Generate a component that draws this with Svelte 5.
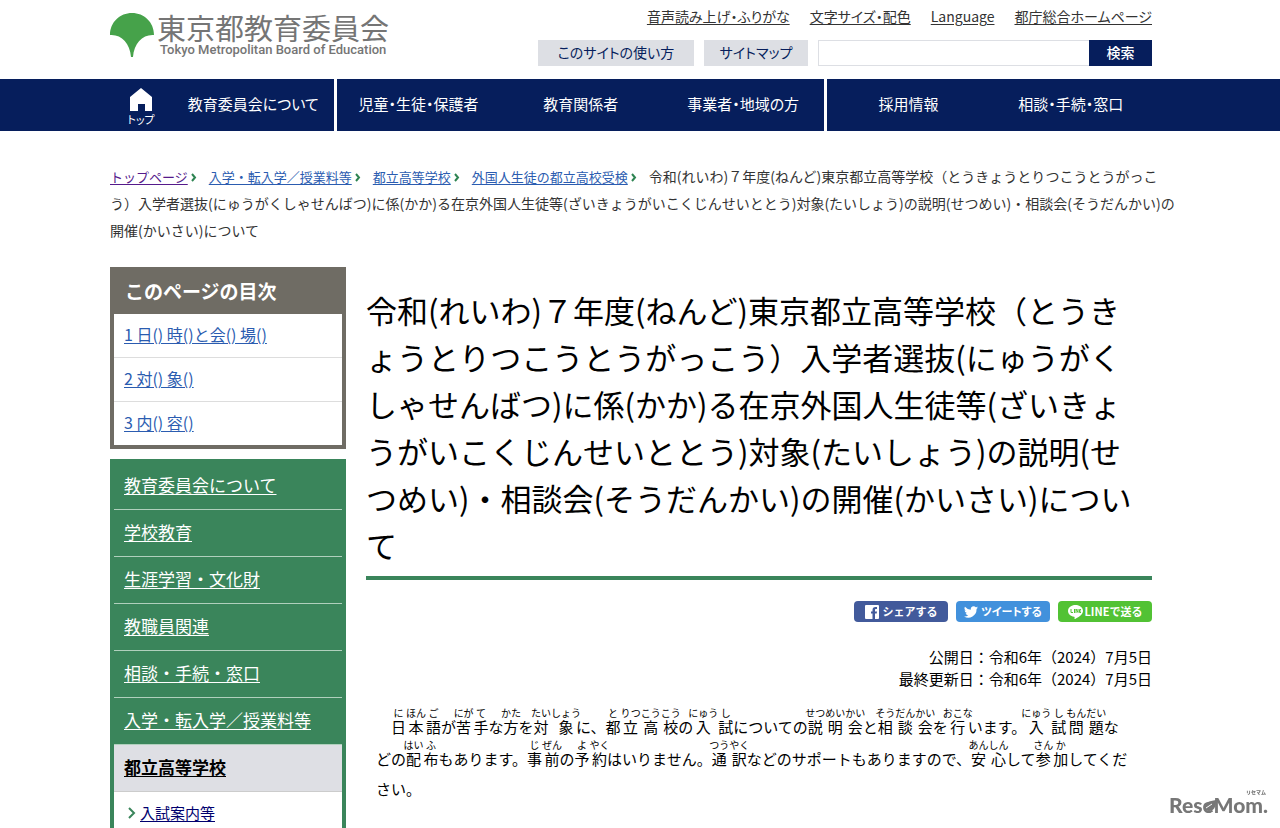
<script lang="ts">
    type Part = string | [string, string];

    const topLinks = ['音声読み上げ・ふりがな', '文字サイズ・配色', 'Language', '都庁総合ホームページ'];

    const nav = [
        { title: '教育委員会について', last: true },
        { title: '児童・生徒・保護者' },
        { title: '教育関係者' },
        { title: '事業者・地域の方', last: true },
        { title: '採用情報' },
        { title: '相談・手続・窓口' }
    ];

    const crumbs = [
        { title: 'トップページ', visited: true },
        { title: '入学・転入学／授業料等' },
        { title: '都立高等学校' },
        { title: '外国人生徒の都立高校受検' }
    ];

    const toc = ['1 日() 時()と会() 場()', '2 対() 象()', '3 内() 容()'];

    const categories = [
        '教育委員会について',
        '学校教育',
        '生涯学習・文化財',
        '教職員関連',
        '相談・手続・窓口',
        '入学・転入学／授業料等'
    ];

    const lines: Part[][] = [
        [
            ['日', 'に'], ['本', 'ほん'], ['語', 'ご'], 'が', ['苦', 'にが'], ['手', 'て'], 'な', ['方', 'かた'], 'を',
            ['対', 'たい'], ['象', 'しょう'], 'に、', ['都', 'と'], ['立', 'りつ'], ['高', 'こう'], ['校', 'こう'], 'の',
            ['入', 'にゅう'], ['試', 'し'], 'についての', ['説', 'せつ'], ['明', 'めい'], ['会', 'かい'], 'と',
            ['相', 'そう'], ['談', 'だん'], ['会', 'かい'], 'を', ['行', 'おこな'], 'います。',
            ['入', 'にゅう'], ['試', 'し'], ['問', 'もん'], ['題', 'だい'], 'な'
        ],
        [
            'どの', ['配', 'はい'], ['布', 'ふ'], 'もあります。', ['事', 'じ'], ['前', 'ぜん'], 'の', ['予', 'よ'], ['約', 'やく'],
            'はいりません。', ['通', 'つう'], ['訳', 'やく'], 'などのサポートもありますので、',
            ['安', 'あん'], ['心', 'しん'], 'して', ['参', 'さん'], ['加', 'か'], 'してくだ'
        ],
        ['さい。']
    ];
</script>

<header class="header wrap">
    <a href="#top" class="logo" aria-label="東京都教育委員会">
        <svg class="logo__mark" viewBox="0 0 44 44" aria-hidden="true">
            <path fill="#46a24a" d="M0 22C0 9 10 0 22 0s22 9 22 22c-11-1-20 8-21 22h-2C20 30 11 21 0 22z" />
        </svg>
        <span class="logo__text">
            <span class="logo__ja">東京都教育委員会</span>
            <span class="logo__en">Tokyo Metropolitan Board of Education</span>
        </span>
    </a>
    <div class="tools">
        <ul class="tools__links">
            {#each topLinks as link}
                <li><a href="#top">{link}</a></li>
            {/each}
        </ul>
        <div class="tools__row">
            <a href="#guide" class="tools__button tools__button_wide">このサイトの使い方</a>
            <a href="#sitemap" class="tools__button">サイトマップ</a>
            <form class="search">
                <input type="text" class="search__input" aria-label="サイト内検索">
                <button type="button" class="search__submit">検索</button>
            </form>
        </div>
    </div>
</header>

<nav class="nav">
    <div class="nav__inner wrap">
        <a href="#top" class="nav__home">
            <svg viewBox="0 0 22 23" width="22" height="23" aria-hidden="true">
                <path fill="#fff" d="M11 0l11 9v14h-7v-7H8v7H0V9z" />
            </svg>
            トップ
        </a>
        {#each nav as item}
            <a href="#nav" class="nav__item" class:nav__item_last={item.last}>{item.title}</a>
        {/each}
    </div>
</nav>

<div class="wrap">
    <div class="crumbs">
        {#each crumbs as crumb}
            <a href="#crumb" class:visited={crumb.visited}>{crumb.title}</a><svg class="crumbs__arrow" viewBox="0 0 6 9" aria-hidden="true"><path fill="none" stroke="#2e8452" stroke-width="2" d="M1 1l3 3.500L1 8" /></svg>
        {/each}<span class="crumbs__current">令和(れいわ)７年度(ねんど)東京都立高等学校（とうきょうとりつこうとうがっこ<br>う）入学者選抜(にゅうがくしゃせんばつ)に係(かか)る在京外国人生徒等(ざいきょうがいこくじんせいととう)対象(たいしょう)の説明(せつめい)・相談会(そうだんかい)の<br>開催(かいさい)について</span>
    </div>

    <div class="columns">
        <aside class="side">
            <section class="toc">
                <h2 class="toc__title">このページの目次</h2>
                <ul>
                    {#each toc as item}
                        <li class="toc__item"><a href="#section">{item}</a></li>
                    {/each}
                </ul>
            </section>
            <ul class="menu">
                {#each categories as item}
                    <li class="menu__item"><a href="#category">{item}</a></li>
                {/each}
                <li class="menu__item menu__item_current"><a href="#category">都立高等学校</a></li>
                <li class="menu__sub">
                    <svg viewBox="0 0 8 12" width="8" height="12" aria-hidden="true">
                        <path fill="none" stroke="#3a855b" stroke-width="2" d="M1 1l5 5-5 5" />
                    </svg>
                    <a href="#sub">入試案内等</a>
                </li>
            </ul>
        </aside>

        <main class="main">
            <h1>
                令和(れいわ)７年度(ねんど)東京都立高等学校（とうき<br>
                ょうとりつこうとうがっこう）入学者選抜(にゅうがく<br>
                しゃせんばつ)に係(かか)る在京外国人生徒等(ざいきょ<br>
                うがいこくじんせいととう)対象(たいしょう)の説明(せ<br>
                つめい)・相談会(そうだんかい)の開催(かいさい)につい<br>
                て
            </h1>

            <div class="share">
                <a href="#facebook" class="share__button share__button_fb">
                    <svg viewBox="0 0 14 14" width="14" height="14" aria-hidden="true">
                        <rect width="14" height="14" rx="1" fill="#fff" />
                        <path fill="#425a9b" d="M7.500 14V8.500H6v-2h1.500V5c0-2 1-3 3-3H12v2h-1c-.8 0-1 .3-1 1v1.500h2l-.3 2H10V14z" />
                    </svg>
                    シェアする
                </a>
                <a href="#twitter" class="share__button share__button_tw">
                    <svg viewBox="0 0 24 20" width="14" height="12" aria-hidden="true">
                        <path fill="#fff" d="M24 2.400a10 10 0 0 1-2.800.8A5 5 0 0 0 23.300.5a10 10 0 0 1-3.100 1.200 4.900 4.900 0 0 0-8.400 4.500A14 14 0 0 1 1.700 1a4.900 4.900 0 0 0 1.500 6.600 5 5 0 0 1-2.200-.6 4.900 4.900 0 0 0 4 4.900 5 5 0 0 1-2.300.1 4.900 4.900 0 0 0 4.600 3.400A10 10 0 0 1 0 17.500 14 14 0 0 0 21.500 5c1-.7 1.800-1.600 2.500-2.600z" />
                    </svg>
                    ツイートする
                </a>
                <a href="#line" class="share__button share__button_line">
                    <svg viewBox="0 0 15 14" width="15" height="14" aria-hidden="true">
                        <path fill="#fff" d="M7.500 0C3.400 0 0 2.600 0 5.900c0 2.900 2.600 5.300 6.100 5.800.5.100.6.500.5 1l-.1 1c0 .3.300.4.700.2 3-1.600 7.800-4.500 7.800-8C15 2.600 11.600 0 7.500 0z" />
                        <path fill="none" stroke="#52c234" d="M3 4v3.500h2M6.500 4v4M8 8V4l2 3.500V4M13 4.500h-1.500v3H13M11.500 6H13" />
                    </svg>
                    LINEで送る
                </a>
            </div>

            <p class="dates">
                公開日：令和6年（2024）7月5日<br>
                最終更新日：令和6年（2024）7月5日
            </p>

            <p class="text">
                {#each lines as line, i}{#if i}<br>{/if}{#each line as part}{#if typeof part === 'string'}{part}{:else}<ruby>{part[0]}<rt>{part[1]}</rt></ruby>{/if}{/each}{/each}
            </p>
        </main>
    </div>
</div>

<div class="credit">
    <span class="credit__ruby">リセマム</span>
    ReseMom.
    <svg class="credit__leaf" viewBox="0 0 12 11" aria-hidden="true">
        <path fill="#777" d="M12 0c0 7-2 11-7 11-3 0-5-2-5-4 0-4 5-6 12-7z" />
        <path fill="none" stroke="#fff" d="M2 8l6-4" />
    </svg>
</div>

<style>
    :global(body) {
        overflow: hidden;
        background: #fff;
        color: #000;
        font-family: "Noto Sans CJK JP", sans-serif;
        font-size: 15px;
    }

    ul {
        margin: 0;
        padding: 0;
        list-style: none;
    }

    a {
        color: #2b5cb0;
        text-underline-offset: 2px;
    }

    .wrap {
        padding: 0 128px 0 110px;
    }

    .header {
        display: flex;
        justify-content: space-between;
        height: 79px;
    }

    .logo {
        display: flex;
        align-items: flex-start;
        gap: 3px;
        padding-top: 13px;
        color: #757575;
        text-decoration: none;
        white-space: nowrap;
    }

    .logo__mark {
        width: 44px;
        height: 44px;
    }

    .logo__text {
        display: flex;
        flex-direction: column;
    }

    .logo__ja {
        font-size: 29px;
        line-height: 28px;
    }

    .logo__en {
        padding-left: 3px;
        font-family: Roboto, sans-serif;
        font-size: 13px;
        font-weight: 500;
        line-height: 18px;
    }

    .tools {
        padding-top: 5px;
        font-size: 14px;
        line-height: 22px;
        font-feature-settings: "palt";
    }

    .tools__links {
        display: flex;
        justify-content: flex-end;
        gap: 20px;
    }

    .tools__links a {
        color: #333;
    }

    .tools__row {
        display: flex;
        justify-content: flex-end;
        gap: 10px;
        margin-top: 13px;
    }

    .tools__button {
        box-sizing: border-box;
        width: 104px;
        padding-bottom: 2px;
        background: #dddfe4;
        color: #061e5c;
        line-height: 24px;
        text-align: center;
        text-decoration: none;
    }

    .tools__button_wide {
        width: 156px;
    }

    .search {
        display: flex;
    }

    .search__input {
        box-sizing: border-box;
        width: 271px;
        height: 26px;
        padding: 0 6px;
        border: 1px solid #dddfe4;
        border-right: 0;
    }

    .search__submit {
        width: 63px;
        height: 26px;
        padding: 0 0 2px;
        border: 0;
        background: #061e5c;
        color: #fff;
        font: inherit;
        font-weight: 500;
    }

    .nav {
        background: #061e5c;
        font-feature-settings: "palt";
    }

    .nav__inner {
        display: flex;
        height: 52px;
    }

    .nav a {
        color: #fff;
        text-decoration: none;
    }

    .nav__home {
        display: flex;
        flex-direction: column;
        align-items: center;
        justify-content: flex-end;
        width: 62px;
        padding-bottom: 4px;
        font-size: 11px;
        line-height: 16px;
    }

    .nav__item {
        box-sizing: border-box;
        flex: 1 1 0;
        line-height: 49px;
        text-align: center;
        white-space: nowrap;
    }

    .nav__item_last {
        border-right: 3px solid #fff;
    }

    .crumbs {
        padding: 32px 0 23px;
        color: #333;
        font-size: 13px;
        line-height: 27px;
        white-space: nowrap;
    }

    .crumbs .visited {
        color: #551a8b;
    }

    .crumbs__arrow {
        width: 6px;
        height: 9px;
        margin: 0 12px 0 3px;
    }

    .crumbs__current {
        font-size: 14px;
    }

    .columns {
        display: flex;
        align-items: flex-start;
        gap: 20px;
    }

    .side {
        flex: none;
        width: 236px;
    }

    .toc {
        margin-bottom: 10px;
        border: 4px solid #6f6c64;
        border-top: 0;
    }

    .toc__title {
        margin: 0;
        padding: 0 11px;
        background: #6f6c64;
        color: #fff;
        font-size: 19px;
        line-height: 47px;
    }

    .toc__item {
        padding: 0 10px 2px;
        font-size: 16px;
        line-height: 41px;
    }

    .toc__item + .toc__item {
        border-top: 1px solid #ddd;
    }

    .menu {
        padding-top: 4px;
        border: 4px solid #3a855b;
        border-top: 0;
        background: #3a855b;
        font-size: 17px;
    }

    .menu__item {
        padding: 0 10px 2px;
        border-bottom: 1px solid #b0d0bd;
        line-height: 44px;
    }

    .menu__item a {
        color: #fff;
    }

    .menu__item_current {
        border-color: #ccc;
        background: #dedfe4;
        font-weight: 700;
    }

    .menu__item_current a {
        color: #000;
    }

    .menu__sub {
        display: flex;
        align-items: center;
        gap: 4px;
        padding: 0 14px;
        background: #fff;
        font-size: 15px;
        line-height: 41px;
    }

    .menu__sub a {
        color: #00006e;
    }

    .main {
        flex: 1 1 auto;
        min-width: 0;
    }

    h1 {
        margin: 19px 0 0;
        padding-bottom: 8px;
        border-bottom: 4px solid #3a855b;
        font-size: 31px;
        font-weight: 400;
        line-height: 47px;
        white-space: nowrap;
    }

    .share {
        display: flex;
        justify-content: flex-end;
        gap: 8px;
        margin-top: 21px;
    }

    .share__button {
        display: flex;
        align-items: center;
        justify-content: center;
        gap: 4px;
        width: 94px;
        height: 21px;
        border-radius: 4px;
        color: #fff;
        font-size: 11px;
        font-weight: 700;
        line-height: 21px;
        text-decoration: none;
        white-space: nowrap;
    }

    .share__button_fb {
        background: #425a9b;
    }

    .share__button_tw {
        gap: 3px;
        background: #4291dc;
        font-feature-settings: "palt";
    }

    .share__button_line {
        gap: 2px;
        background: #52c234;
    }

    .dates {
        margin: 24px 0 0;
        line-height: 22px;
        text-align: right;
    }

    .text {
        margin: 18px 0 0;
        padding-left: 10px;
        line-height: 28px;
        text-indent: 15px;
        white-space: nowrap;
    }

    ruby {
        line-height: 32px;
    }

    rt {
        font-size: 10px;
        text-indent: 0;
    }

    .credit {
        position: fixed;
        right: 12px;
        bottom: 10px;
        color: #777;
        font-family: Lato, sans-serif;
        font-size: 21px;
        font-weight: 900;
        line-height: 26px;
    }

    .credit__ruby {
        position: absolute;
        top: -4px;
        right: 2px;
        font-family: "Noto Sans CJK JP", sans-serif;
        font-size: 5px;
        line-height: 8px;
    }

    .credit__leaf {
        position: absolute;
        top: 8px;
        left: 35px;
        width: 12px;
        height: 11px;
    }
</style>
